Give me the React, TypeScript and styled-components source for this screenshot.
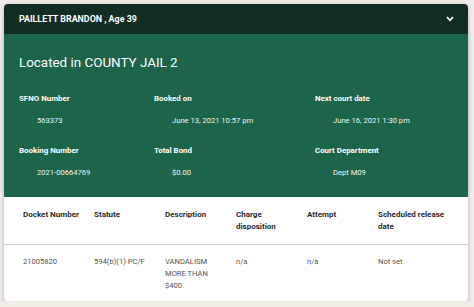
import React from "react";
import styled, { createGlobalStyle } from "styled-components";

const Global = createGlobalStyle`
  body {
    margin: 0;
    background: #f1ede6;
    font-family: Roboto, "Open Sans", sans-serif;
  }
`;

const Card = styled.div`
  margin: 4px 6px 0 4px;
  width: 464px;
  height: 297px;
  border-radius: 4px;
  overflow: hidden;
  background: #fff;
  box-shadow: 0 1px 4px rgba(0, 0, 0, 0.25);
  display: flex;
  flex-direction: column;
`;

const Header = styled.div`
  height: 30px;
  background: #122d21;
  color: #fff;
  display: flex;
  align-items: center;
  justify-content: space-between;
  padding: 0 14px 0 15px;
  font-size: 8.9px;
  font-weight: 700;
`;

const Body = styled.div`
  background: #1c654a;
  color: #fff;
  height: 163px;
  padding: 0 15px;
`;

const Title = styled.h2`
  margin: 0;
  padding-top: 19px;
  height: 40px;
  box-sizing: border-box;
  font-size: 13.4px;
  font-weight: 400;
  line-height: 20px;
`;

const Grid = styled.div`
  display: grid;
  grid-template-columns: 135px 161px 1fr;
  grid-auto-rows: 52px;
  padding-top: 19px;
`;

const Field = styled.div`
  display: flex;
  flex-direction: column;
`;

const Label = styled.div`
  font-size: 7.9px;
  font-weight: 700;
  line-height: 12px;
`;

const Value = styled.div`
  font-size: 7.6px;
  line-height: 12px;
  margin-top: 10px;
  padding-left: 18px;
  color: #eef4f1;
`;

const Table = styled.div`
  flex: 1;
`;

const Row = styled.div<{ $head?: boolean }>`
  display: grid;
  grid-template-columns: repeat(5, 71px) 75px;
  padding: ${(p) => (p.$head ? "12px" : "11px")} 0 0 19px;
  height: ${(p) => (p.$head ? "48px" : "auto")};
  box-sizing: border-box;
  border-bottom: ${(p) => (p.$head ? "1px solid #cfcfcf" : "none")};
`;

const Cell = styled.div<{ $head?: boolean }>`
  font-size: ${(p) => (p.$head ? "8px" : "7.6px")};
  line-height: 12px;
  font-weight: ${(p) => (p.$head ? 700 : 400)};
  color: ${(p) => (p.$head ? "#2a2a2a" : "#555")};
  padding-right: ${(p) => (p.$head ? "6px" : "16px")};
`;

const fields = [
  ["SFNO Number", "563373"],
  ["Booked on", "June 13, 2021 10:57 pm"],
  ["Next court date", "June 16, 2021 1:30 pm"],
  ["Booking Number", "2021-00664769"],
  ["Total Bond", "$0.00"],
  ["Court Department", "Dept M09"],
];

const heads = [
  "Docket Number",
  "Statute",
  "Description",
  "Charge disposition",
  "Attempt",
  "Scheduled release date",
];

const row = [
  "21005820",
  "594(b)(1) PC/F",
  "VANDALISM MORE THAN $400",
  "n/a",
  "n/a",
  "Not set",
];

const App = () => {
  return (
    <>
      <Global />
      <Card>
        <Header>
          <span>PAILLETT BRANDON , Age 39</span>
          <svg width="8" height="6" viewBox="0 0 8 6">
            <path d="M1 1.2l3 3 3-3" stroke="#fff" strokeWidth="1.7" fill="none" />
          </svg>
        </Header>
        <Body>
          <Title>Located in COUNTY JAIL 2</Title>
          <Grid>
            {fields.map(([l, v]) => (
              <Field key={l}>
                <Label>{l}</Label>
                <Value>{v}</Value>
              </Field>
            ))}
          </Grid>
        </Body>
        <Table>
          <Row $head>
            {heads.map((h) => (
              <Cell $head key={h}>
                {h}
              </Cell>
            ))}
          </Row>
          <Row>
            {row.map((c, i) => (
              <Cell key={i}>{c}</Cell>
            ))}
          </Row>
        </Table>
      </Card>
    </>
  );
};

export default App;
